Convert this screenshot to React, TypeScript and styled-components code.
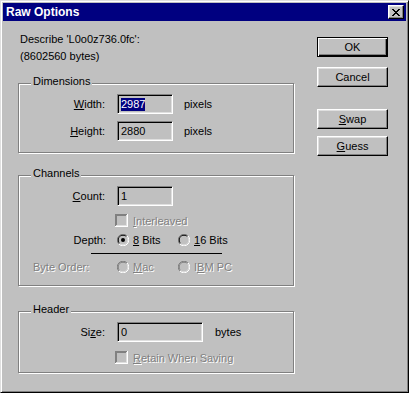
import React from 'react'
import styled, { createGlobalStyle, css } from 'styled-components'

const GlobalStyle = createGlobalStyle`
  html, body {
    margin: 0;
    padding: 0;
    background: #c0c0c0;
  }
  body {
    font-family: "Liberation Sans", Arial, sans-serif;
    font-size: 11px;
    color: #000;
  }
`

const Window = styled.div`
  width: 409px;
  height: 393px;
  box-sizing: border-box;
  background: #c0c0c0;
  border: 1px solid;
  border-color: #dfdfdf #000 #000 #dfdfdf;
  box-shadow: inset 1px 1px #fff, inset -1px -1px #808080;
  padding: 2px;
  display: flex;
  flex-direction: column;
`

const TitleBar = styled.div`
  height: 18px;
  background: #000080;
  color: #fff;
  display: flex;
  align-items: center;
  padding-left: 3px;
  font-weight: bold;
  font-size: 12px;
`

const CloseButton = styled.div`
  margin-left: auto;
  margin-right: 2px;
  width: 16px;
  height: 14px;
  box-sizing: border-box;
  background: #c0c0c0;
  border: 1px solid;
  border-color: #fff #000 #000 #fff;
  box-shadow: inset -1px -1px #808080, inset 1px 1px #dfdfdf;
  display: flex;
  align-items: center;
  justify-content: center;
`

const Body = styled.div`
  flex: 1;
  display: flex;
`

const LeftColumn = styled.div`
  width: 291px;
  box-sizing: border-box;
  padding-left: 15px;
  display: flex;
  flex-direction: column;
`

const RightColumn = styled.div`
  padding-left: 23px;
  padding-top: 16px;
  display: flex;
  flex-direction: column;
`

const Describe = styled.div`
  margin-top: 10px;
  line-height: 17px;
  padding-left: 2px;
`

const Group = styled.div<{ $top: number; $height: number }>`
  position: relative;
  margin-top: ${p => p.$top}px;
  width: 276px;
  height: ${p => p.$height}px;
  box-sizing: border-box;
  border: 1px solid #808080;
  box-shadow: inset 1px 1px #fff, 1px 1px #fff;
  display: flex;
  flex-direction: column;
`

const Legend = styled.div`
  position: absolute;
  top: -9px;
  left: 12px;
  padding: 0 2px;
  line-height: 13px;
  background: #c0c0c0;
`

const Row = styled.div<{ $top: number; $height: number }>`
  display: flex;
  align-items: center;
  margin-top: ${p => p.$top}px;
  height: ${p => p.$height}px;
`

const Label = styled.div<{ $gap?: number; $left?: boolean; $disabled?: boolean }>`
  width: 98px;
  box-sizing: border-box;
  text-align: ${p => (p.$left ? 'left' : 'right')};
  padding-right: ${p => p.$gap ?? 12}px;
  padding-left: ${p => (p.$left ? 14 : 0)}px;
  ${p => p.$disabled && disabledText}
`

const disabledText = css`
  color: #808080;
  text-shadow: 1px 1px 0 #fff;
`

const Field = styled.div<{ $width: number }>`
  width: ${p => p.$width}px;
  height: 20px;
  box-sizing: border-box;
  border: 1px solid;
  border-color: #808080 #fff #fff #808080;
  box-shadow: inset 1px 1px #000, inset -1px -1px #dfdfdf;
  background: #c0c0c0;
  padding: 0 3px;
  display: flex;
  align-items: center;
`

const Selected = styled.span`
  background: #000080;
  color: #fff;
  line-height: 13px;
`

const Unit = styled.div<{ $gap: number }>`
  margin-left: ${p => p.$gap}px;
`

const Indent = styled.div`
  width: 96px;
  flex: none;
`

const CheckText = styled.span<{ $disabled?: boolean }>`
  margin-left: 5px;
  ${p => p.$disabled && disabledText}
`

const Option = styled.div<{ $width?: number }>`
  display: flex;
  align-items: center;
  width: ${p => (p.$width ? `${p.$width}px` : 'auto')};
`

const OptionText = styled.span<{ $disabled?: boolean }>`
  margin-left: 4px;
  ${p => p.$disabled && disabledText}
`

const Separator = styled.div`
  margin-top: 6px;
  margin-left: 72px;
  width: 131px;
  height: 1px;
  background: #000;
`

const Mn = styled.u`
  text-decoration: underline;
  text-underline-offset: 1px;
`

const Button = styled.div<{ $default?: boolean; $top: number }>`
  width: 71px;
  height: 20px;
  margin-top: ${p => p.$top}px;
  box-sizing: border-box;
  display: flex;
  align-items: center;
  justify-content: center;
  border: 1px solid;
  ${p =>
    p.$default
      ? css`
          border-color: #000;
          box-shadow: inset 1px 1px #fff, inset -1px -1px #000, inset -2px -2px #808080;
        `
      : css`
          border-color: #fff #000 #000 #fff;
          box-shadow: inset -1px -1px #808080, inset 1px 1px #dfdfdf;
        `}
`

const CloseIcon = () => (
  <svg width="8" height="7" viewBox="0 0 8 7" shapeRendering="crispEdges">
    <path
      fill="#000"
      d="M0 0h2v1h-2zM6 0h2v1h-2zM1 1h2v1h-2zM5 1h2v1h-2zM2 2h4v1h-4zM3 3h2v1h-2zM2 4h4v1h-4zM1 5h2v1h-2zM5 5h2v1h-2zM0 6h2v1h-2zM6 6h2v1h-2z"
    />
  </svg>
)

const Check = ({ disabled }: { disabled?: boolean }) => (
  <svg width="13" height="13" viewBox="0 0 13 13" shapeRendering="crispEdges">
    <rect x="0" y="0" width="13" height="13" fill="#fff" />
    <rect x="0" y="0" width="12" height="12" fill="#808080" />
    <rect x="1" y="1" width="11" height="11" fill="#dfdfdf" />
    <rect x="1" y="1" width="10" height="10" fill={disabled ? '#808080' : '#000'} />
    <rect x="2" y="2" width="9" height="9" fill="#c0c0c0" />
  </svg>
)

const Radio = ({ checked, disabled }: { checked?: boolean; disabled?: boolean }) => (
  <svg width="12" height="12" viewBox="0 0 12 12">
    <path d="M1.9 10.1A5.5 5.5 0 0 1 10.1 1.9" fill="none" stroke="#808080" />
    <path d="M10.1 1.9A5.5 5.5 0 0 1 1.9 10.1" fill="none" stroke="#fff" />
    <path d="M2.6 9.4A4.5 4.5 0 0 1 9.4 2.6" fill="none" stroke={disabled ? '#808080' : '#000'} />
    <path d="M9.4 2.6A4.5 4.5 0 0 1 2.6 9.4" fill="none" stroke="#dfdfdf" />
    <circle cx="6" cy="6" r="4" fill="#c0c0c0" />
    {checked && <circle cx="6" cy="6" r="2" fill="#000" />}
  </svg>
)

export default function App() {
  return (
    <>
      <GlobalStyle />
      <Window>
        <TitleBar>
          Raw Options
          <CloseButton>
            <CloseIcon />
          </CloseButton>
        </TitleBar>
        <Body>
          <LeftColumn>
            <Describe>
              Describe 'L0o0z736.0fc':
              <br />
              (8602560 bytes)
            </Describe>

            <Group $top={18} $height={70}>
              <Legend>Dimensions</Legend>
              <Row $top={10} $height={20}>
                <Label>
                  <Mn>W</Mn>idth:
                </Label>
                <Field $width={56}>
                  <Selected>2987</Selected>
                </Field>
                <Unit $gap={11}>pixels</Unit>
              </Row>
              <Row $top={7} $height={20}>
                <Label>
                  <Mn>H</Mn>eight:
                </Label>
                <Field $width={56}>2880</Field>
                <Unit $gap={11}>pixels</Unit>
              </Row>
            </Group>

            <Group $top={22} $height={111}>
              <Legend>Channels</Legend>
              <Row $top={10} $height={20}>
                <Label>
                  <Mn>C</Mn>ount:
                </Label>
                <Field $width={56}>1</Field>
              </Row>
              <Row $top={7} $height={15}>
                <Indent />
                <Check disabled />
                <CheckText $disabled>
                  <Mn>I</Mn>nterleaved
                </CheckText>
              </Row>
              <Row $top={4} $height={15}>
                <Label $gap={11}>Depth:</Label>
                <Option $width={61}>
                  <Radio checked />
                  <OptionText>
                    <Mn>8</Mn> Bits
                  </OptionText>
                </Option>
                <Option>
                  <Radio />
                  <OptionText>
                    <Mn>1</Mn>6 Bits
                  </OptionText>
                </Option>
              </Row>
              <Separator />
              <Row $top={5} $height={16}>
                <Label $left $gap={0} $disabled>
                  Byte Order:
                </Label>
                <Option $width={61}>
                  <Radio disabled />
                  <OptionText $disabled>
                    <Mn>M</Mn>ac
                  </OptionText>
                </Option>
                <Option>
                  <Radio disabled />
                  <OptionText $disabled>
                    I<Mn>B</Mn>M PC
                  </OptionText>
                </Option>
              </Row>
            </Group>

            <Group $top={25} $height={62}>
              <Legend>Header</Legend>
              <Row $top={10} $height={20}>
                <Label>
                  Si<Mn>z</Mn>e:
                </Label>
                <Field $width={86}>0</Field>
                <Unit $gap={12}>bytes</Unit>
              </Row>
              <Row $top={8} $height={15}>
                <Indent />
                <Check disabled />
                <CheckText $disabled>
                  <Mn>R</Mn>etain When Saving
                </CheckText>
              </Row>
            </Group>
          </LeftColumn>

          <RightColumn>
            <Button $default $top={0}>OK</Button>
            <Button $top={10}>Cancel</Button>
            <Button $top={22}>
              <Mn>S</Mn>wap
            </Button>
            <Button $top={7}>
              <Mn>G</Mn>uess
            </Button>
          </RightColumn>
        </Body>
      </Window>
    </>
  )
}
